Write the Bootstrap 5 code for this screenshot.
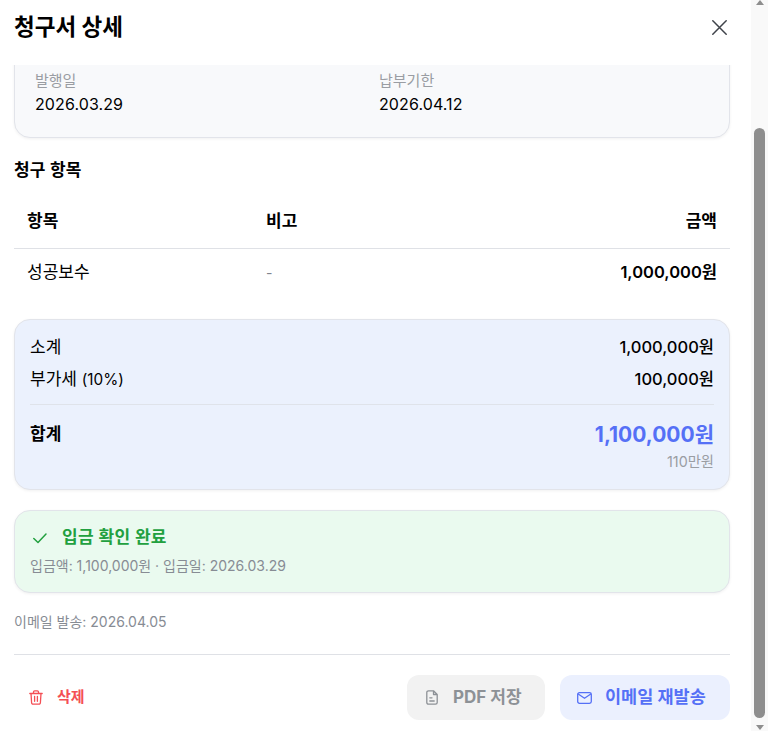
<!DOCTYPE html>
<html lang="ko">
<head>
<meta charset="utf-8">
<title>청구서 상세</title>
<link href="https://cdn.jsdelivr.net/npm/bootstrap@5.3.0/dist/css/bootstrap.min.css" rel="stylesheet">
<style>
html,body{height:731px;overflow:hidden;background:#fff}
body{font-family:Inter,"Noto Sans CJK KR",sans-serif;color:#000;font-size:15px}
.shell{height:731px;width:768px}
.pane{width:751px;height:731px}
.head{height:65px;padding:0 24px 11px 14px;flex:none}
.head h1{font-size:22.500px;font-weight:700;margin:0;line-height:1}
.scroller{overflow:hidden;flex:1;padding:0 21px 0 14px}
.panel-box{border:1px solid #e2e4ea;border-radius:16px;box-shadow:0 1px 3px rgba(0,0,0,.06)}
.info-box{background:#f8f9fb;margin-top:-20px;height:93px;padding:23px 20px 0}
.info-cell{width:344px;flex:none}
.lbl{font-size:15px;color:#9a9da3;line-height:23px}
.val{font-size:16px;line-height:25px;letter-spacing:.1px}
.sec-title{font-size:17px;font-weight:700;line-height:24px;margin:20px 0 14px;letter-spacing:.2px}
.items{width:100%;table-layout:fixed}
.items th{height:52px;font-size:17px;font-weight:700;padding:0 13px;border-bottom:1px solid #dfe1e6}
.items td{height:48px;font-size:17px;padding:0 13px}
.c1{width:239px}.c2{width:232px}
.items .dash{font-size:14px;color:#80858d}
.items .amt{font-weight:600;font-size:16.500px}
.sum-box{background:#ebf1fd;margin-top:23px;height:171px;padding:12px 15px}
.sum-row{line-height:31px;font-size:17px}
.sum-row + .sum-row{margin-top:1px}
.sum-fig{font-size:16.500px;font-weight:500}
.pct{font-size:15.300px}
.sum-line{border-top:1px solid #dfe3ea;margin:9px 0 11px}
.tot-lab{font-weight:700;font-size:17px;line-height:34px;margin-top:1px}
.tot-val{font-size:21px;font-weight:700;color:#5570f6;line-height:34px;margin-top:2px}
.man{font-size:14.300px;color:#9a9da3;line-height:22px;margin-top:-1px}
.ok-box{background:#eafaef;margin-top:20px;height:83px;padding:13px 15px}
.ok-t{font-size:17px;font-weight:600;color:#22a03f;line-height:27px;gap:12px}
.ok-t span{letter-spacing:.3px}
.ok-s{font-size:14px;color:#878c94;line-height:22px;margin-top:4px}
.mail-note{font-size:14px;color:#878c94;line-height:22px;margin:18px 0 21px}
.foot{border-top:1px solid #dfe1e6;padding-top:20px}
.act{height:45px;border:0;border-radius:12px;font-size:17px;font-weight:700;display:inline-flex;align-items:center;justify-content:flex-start;background:transparent}
.act-del{color:#f44f55;width:80px;font-size:15px;gap:14px;padding:0 0 0 15px}
.act-pdf{background:#f2f2f2;color:#8d9196;width:138px;gap:15px;padding:0 0 0 19px}
.act-mail{background:#ebf0fe;color:#5570f6;width:170px;gap:13px;padding:0 0 0 17px;font-size:17.500px}
.act-gap{gap:15px}
.track{width:17px;background:#f9f9f9;flex:none;height:731px;padding:0 3px}
.arrow-up,.arrow-dn{width:0;height:0;border-left:4.500px solid transparent;border-right:4.500px solid transparent;margin:0 auto}
.arrow-up{border-bottom:5px solid #8e8e8e;height:5px;margin-bottom:123px}
.arrow-dn{border-top:5px solid #8e8e8e;margin-top:7px}
.thumb{height:590px;background:#8e8e8e;border-radius:6px}
</style>
</head>
<body>
<div class="shell d-flex">
  <div class="pane d-flex flex-column">
    <div class="head d-flex align-items-center justify-content-between">
      <h1>청구서 상세</h1>
      <svg width="15" height="15" viewBox="0 0 15 15" fill="none" stroke="#3f434a" stroke-width="1.500" stroke-linecap="round" aria-label="닫기"><path d="M.8.8l13.400 13.400M14.200.8L.8 14.200"/></svg>
    </div>
    <div class="scroller">
      <div class="panel-box info-box d-flex">
        <div class="info-cell"><div class="lbl">발행일</div><div class="val">2026.03.29</div></div>
        <div class="info-cell"><div class="lbl">납부기한</div><div class="val">2026.04.12</div></div>
      </div>
      <div class="sec-title">청구 항목</div>
      <table class="items">
        <thead><tr><th class="c1">항목</th><th class="c2">비고</th><th class="text-end">금액</th></tr></thead>
        <tbody><tr><td>성공보수</td><td class="dash">-</td><td class="text-end amt">1,000,000원</td></tr></tbody>
      </table>
      <div class="panel-box sum-box">
        <div class="d-flex justify-content-between sum-row"><span>소계</span><span class="sum-fig">1,000,000원</span></div>
        <div class="d-flex justify-content-between sum-row"><span>부가세 <span class="pct">(10%)</span></span><span class="sum-fig">100,000원</span></div>
        <div class="sum-line"></div>
        <div class="d-flex justify-content-between"><span class="tot-lab">합계</span><span class="tot-val">1,100,000원</span></div>
        <div class="text-end man">110만원</div>
      </div>
      <div class="panel-box ok-box">
        <div class="d-flex align-items-center ok-t">
          <svg width="20" height="20" viewBox="0 0 20 20" fill="none" stroke="#22a03f" stroke-width="1.500" stroke-linecap="round" stroke-linejoin="round"><path d="M3.800 10.500l4.200 4 8-8.500"/></svg>
          <span>입금 확인 완료</span>
        </div>
        <div class="ok-s">입금액: 1,100,000원 · 입금일: 2026.03.29</div>
      </div>
      <div class="mail-note">이메일 발송: 2026.04.05</div>
      <div class="foot d-flex align-items-center">
        <button class="act act-del" type="button">
          <svg width="14" height="15" viewBox="0 0 14 15" fill="none" stroke="#f44f55" stroke-width="1.300" stroke-linecap="round" stroke-linejoin="round"><path d="M.8 3.500h12.400M4.500 3.500V2a1.200 1.200 0 0 1 1.200-1.200h2.600A1.200 1.200 0 0 1 9.500 2v1.500M2 3.500l.6 9.200a1.500 1.500 0 0 0 1.500 1.500h5.800a1.500 1.500 0 0 0 1.500-1.500l.6-9.200M5.600 6.500v4.800M8.400 6.500v4.800"/></svg>
          <span>삭제</span>
        </button>
        <div class="ms-auto d-flex act-gap">
          <button class="act act-pdf" type="button">
            <svg width="12" height="15" viewBox="0 0 12 15" fill="none" stroke="#8d9196" stroke-width="1.300" stroke-linecap="round" stroke-linejoin="round"><path d="M7.500.8H2.500A1.700 1.700 0 0 0 .8 2.500v10a1.700 1.700 0 0 0 1.700 1.700h7a1.700 1.700 0 0 0 1.700-1.700V4.500zM7.500.8v3.700h3.700M3.800 7.800h2.200M3.800 11h4.400"/></svg>
            <span>PDF 저장</span>
          </button>
          <button class="act act-mail" type="button">
            <svg width="15" height="12" viewBox="0 0 15 12" fill="none" stroke="#5570f6" stroke-width="1.300" stroke-linecap="round" stroke-linejoin="round"><rect x=".7" y=".7" width="13.600" height="10.600" rx="1.800"/><path d="M1.200 2L7.500 6.300 13.800 2"/></svg>
            <span>이메일 재발송</span>
          </button>
        </div>
      </div>
    </div>
  </div>
  <div class="track">
    <div class="arrow-up"></div>
    <div class="thumb"></div>
    <div class="arrow-dn"></div>
  </div>
</div>
</body>
</html>
